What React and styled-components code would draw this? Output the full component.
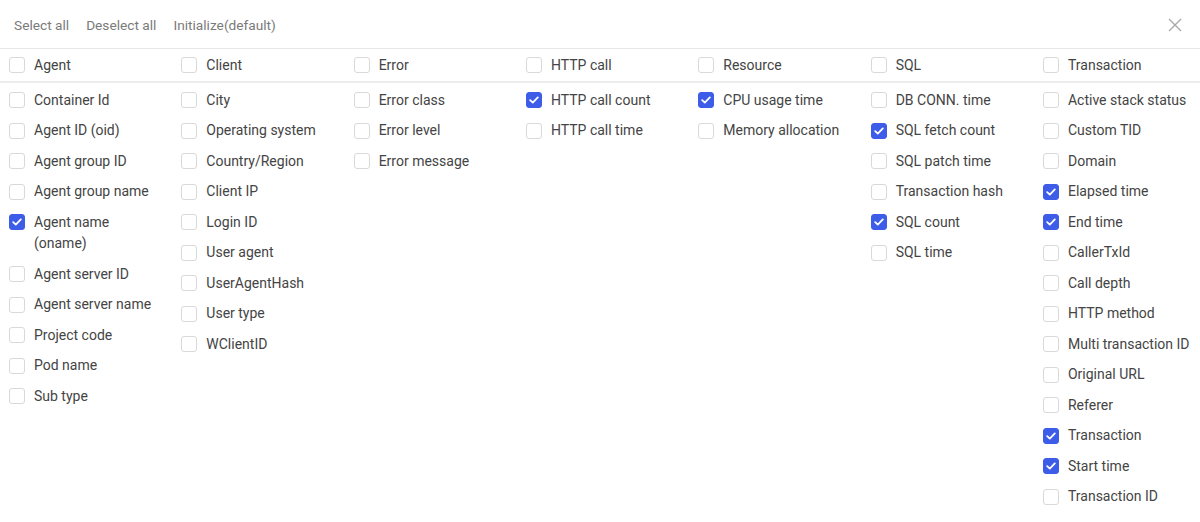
import React, { useState } from "react"
import styled, { createGlobalStyle } from "styled-components"

const GlobalStyle = createGlobalStyle`
  body {
    margin: 0;
    background: #fff;
    font-family: Roboto, "Noto Sans", Arial, sans-serif;
  }
`

const Panel = styled.div`
  width: 1200px;
  height: 522px;
  overflow: hidden;
  background: #fff;
  color: #444;
`

const Toolbar = styled.div`
  display: flex;
  align-items: center;
  height: 49px;
  padding: 2px 14px 0 14px;
  box-sizing: border-box;
  border-bottom: 1px solid #e6e6e6;
  gap: 17px;
`

const ToolButton = styled.button`
  border: none;
  background: none;
  padding: 0;
  font-family: inherit;
  font-size: 13.7px;
  color: #7a7a7a;
  cursor: pointer;
`

const CloseButton = styled.button`
  margin-left: auto;
  margin-right: 3px;
  border: none;
  background: none;
  padding: 0;
  width: 16px;
  height: 16px;
  display: flex;
  align-items: center;
  justify-content: center;
  cursor: pointer;
`

const Grid = styled.div`
  display: grid;
  grid-template-columns: repeat(7, 172.33px);
`

const HeaderRow = styled.div`
  display: contents;
`

const HeaderCell = styled.label`
  display: flex;
  align-items: center;
  height: 32px;
  padding-left: 9px;
  border-bottom: 2px solid #ececec;
  font-size: 14px;
  color: #444;
  cursor: pointer;
`

const Column = styled.div`
  display: flex;
  flex-direction: column;
  padding-top: 2px;
`

const Item = styled.label`
  display: flex;
  align-items: flex-start;
  padding: 4.5px 0 4.5px 9px;
  font-size: 14px;
  line-height: 21.5px;
  color: #444;
  cursor: pointer;
`

const Label = styled.span`
  margin-left: 9px;
  max-width: 130px;
`

const Box = styled.span`
  flex: none;
  width: 16px;
  height: 16px;
  box-sizing: border-box;
  border-radius: 3px;
  border: 1px solid ${(p) => (p.checked ? "#3d5ce8" : "#d9d9d9")};
  background: ${(p) => (p.checked ? "#3d5ce8" : "#fff")};
  display: flex;
  align-items: center;
  justify-content: center;
  margin-top: ${(p) => (p.header ? "0" : "2.5px")};
`

const Checkbox = ({ checked, header }) => (
  <Box checked={checked} header={header}>
    {checked && (
      <svg width="10" height="8" viewBox="0 0 10 8">
        <path d="M1.2 4.2 L3.8 6.6 L8.8 1.4" fill="none" stroke="#fff" strokeWidth="1.8" strokeLinecap="round" strokeLinejoin="round" />
      </svg>
    )}
  </Box>
)

const groups = [
  {
    name: "Agent",
    items: [
      ["Container Id"],
      ["Agent ID (oid)"],
      ["Agent group ID"],
      ["Agent group name"],
      ["Agent name (oname)", true],
      ["Agent server ID"],
      ["Agent server name"],
      ["Project code"],
      ["Pod name"],
      ["Sub type"],
    ],
  },
  {
    name: "Client",
    items: [
      ["City"],
      ["Operating system"],
      ["Country/Region"],
      ["Client IP"],
      ["Login ID"],
      ["User agent"],
      ["UserAgentHash"],
      ["User type"],
      ["WClientID"],
    ],
  },
  {
    name: "Error",
    items: [["Error class"], ["Error level"], ["Error message"]],
  },
  {
    name: "HTTP call",
    items: [["HTTP call count", true], ["HTTP call time"]],
  },
  {
    name: "Resource",
    items: [["CPU usage time", true], ["Memory allocation"]],
  },
  {
    name: "SQL",
    items: [
      ["DB CONN. time"],
      ["SQL fetch count", true],
      ["SQL patch time"],
      ["Transaction hash"],
      ["SQL count", true],
      ["SQL time"],
    ],
  },
  {
    name: "Transaction",
    items: [
      ["Active stack status"],
      ["Custom TID"],
      ["Domain"],
      ["Elapsed time", true],
      ["End time", true],
      ["CallerTxId"],
      ["Call depth"],
      ["HTTP method"],
      ["Multi transaction ID"],
      ["Original URL"],
      ["Referer"],
      ["Transaction", true],
      ["Start time", true],
      ["Transaction ID"],
    ],
  },
]

export default function App() {
  const [state] = useState(groups)
  return (
    <Panel>
      <GlobalStyle />
      <Toolbar>
        <ToolButton>Select all</ToolButton>
        <ToolButton>Deselect all</ToolButton>
        <ToolButton>Initialize(default)</ToolButton>
        <CloseButton aria-label="close">
          <svg width="14" height="14" viewBox="0 0 14 14">
            <path d="M1 1 L13 13 M13 1 L1 13" stroke="#a8a8a8" strokeWidth="1.4" />
          </svg>
        </CloseButton>
      </Toolbar>
      <Grid>
        <HeaderRow>
          {state.map((g) => (
            <HeaderCell key={g.name}>
              <Checkbox header />
              <Label>{g.name}</Label>
            </HeaderCell>
          ))}
        </HeaderRow>
        {state.map((g) => (
          <Column key={g.name}>
            {g.items.map(([label, checked]) => (
              <Item key={label}>
                <Checkbox checked={!!checked} />
                <Label>{label}</Label>
              </Item>
            ))}
          </Column>
        ))}
      </Grid>
    </Panel>
  )
}
